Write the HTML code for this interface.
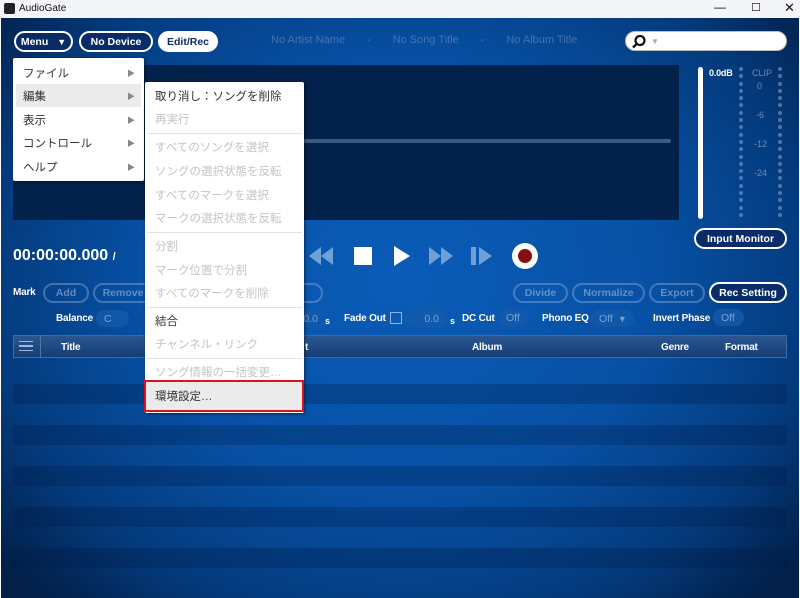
<!DOCTYPE html>
<html><head><meta charset="utf-8"><style>
*{margin:0;padding:0;box-sizing:border-box}
body{width:800px;height:598px;overflow:hidden;font-family:"Liberation Sans","Noto Sans CJK JP",sans-serif;position:relative;background:#fff;white-space:nowrap}
.abs{position:absolute}
#tb{left:0;top:0;width:800px;height:18px;background:#f3f5f9;font-size:10px;color:#111}
#app{left:1px;top:18px;width:798px;height:580px;background:radial-gradient(ellipse 65% 75% at 50% 45%,#0a5cb8 0%,#0750a4 50%,#043a7c 80%,#02204a 100%);overflow:hidden}
.btn{position:absolute;height:21px;border:2px solid #fff;border-radius:11px;color:#fff;font-size:10.5px;font-weight:bold;display:flex;align-items:center;justify-content:center}
.dbtn{position:absolute;height:20px;border:2px solid rgba(140,170,210,.45);border-radius:10px;color:rgba(160,185,215,.6);font-size:10.5px;font-weight:bold;display:flex;align-items:center;justify-content:center}
.lbl{position:absolute;color:#fff;font-size:10px;font-weight:bold;letter-spacing:-0.2px}
.pill{position:absolute;height:17px;border-radius:9px;background:rgba(20,90,170,.8);color:rgba(150,180,215,.8);font-size:10.5px;display:flex;align-items:center;padding:0 8px}
.menu{position:absolute;background:#fff;box-shadow:1px 1px 3px rgba(0,0,0,.5);border-radius:2px}
.mi{position:absolute;left:10px;font-size:11.5px;color:#333}
.dis{color:#c4c4c4}
.sep{position:absolute;left:2px;right:2px;height:1px;background:#e2e2e2}
.arr{position:absolute;left:114px;font-size:8px;color:#888}
.stripe{position:absolute;left:12px;width:774px;height:20px;background:rgba(0,25,70,.28)}
.dots{position:absolute;width:5px}
.dots i{display:block;width:4px;height:4px;border-radius:2px;background:rgba(120,150,195,.65);margin-bottom:3.3px}
</style></head><body>
<div id="tb" class="abs"><div class="abs" style="left:4px;top:3px;width:11px;height:11px;background:#222;border-radius:2px"></div><span class="abs" style="left:19px;top:3px">AudioGate</span>
<span class="abs" style="left:714px;top:0;font-size:12px">—</span><span class="abs" style="left:751px;top:1px;font-size:11px">☐</span><span class="abs" style="left:784px;top:0;font-size:13px">✕</span></div>
<div id="app" class="abs">
 <div class="btn" style="left:13px;top:13px;width:59px;background:#0a2c66">Menu <span style="margin-left:9px;font-size:9px">▼</span></div>
 <div class="btn" style="left:78px;top:13px;width:74px;background:#0a2c66">No Device</div>
 <div class="btn" style="left:157px;top:13px;width:60px;background:#fff;color:#0a2c66">Edit/Rec</div>
 <div class="abs" style="left:270px;top:16px;color:rgba(120,150,200,.55);font-size:11px">No Artist Name<span style="margin:0 22px">-</span>No Song Title<span style="margin:0 22px">-</span>No Album Title</div>
 <div class="abs" style="left:624px;top:13px;width:162px;height:20px;background:#fff;border-radius:10px;border:1px solid #bbb">
  <svg class="abs" style="left:5px;top:2px" width="16" height="15"><circle cx="9" cy="6.5" r="4.5" fill="none" stroke="#111" stroke-width="2.2"/><path d="M5.8 9.8 L2 13.5" stroke="#111" stroke-width="2.4"/></svg>
  <span class="abs" style="left:25px;top:5px;font-size:8px;color:#aaa">▼</span></div>
 <div class="abs" style="left:12px;top:47px;width:666px;height:155px;background:#03224b"></div>
 <div class="abs" style="left:290px;top:121px;width:380px;height:4px;border-radius:2px;background:#3a5a80"></div>
 <div class="abs" style="left:697px;top:49px;width:5px;height:152px;border-radius:3px;background:#fff"></div>
 <div class="lbl" style="left:708px;top:50px;font-size:9px">0.0dB</div>
 <div class="abs" style="left:751px;top:50px;font-size:9px;color:rgba(150,175,210,.7)">CLIP</div>
 <div class="abs" style="left:756px;top:63px;font-size:9px;color:rgba(150,175,210,.7)">0</div>
 <div class="abs" style="left:755px;top:92px;font-size:9px;color:rgba(150,175,210,.7)">-6</div>
 <div class="abs" style="left:753px;top:121px;font-size:9px;color:rgba(150,175,210,.7)">-12</div>
 <div class="abs" style="left:753px;top:150px;font-size:9px;color:rgba(150,175,210,.7)">-24</div>
 <div class="dots" style="left:738px;top:49px"><i></i><i></i><i></i><i></i><i></i><i></i><i></i><i></i><i></i><i></i><i></i><i></i><i></i><i></i><i></i><i></i><i></i><i></i><i></i><i></i><i></i></div>
 <div class="dots" style="left:777px;top:49px"><i></i><i></i><i></i><i></i><i></i><i></i><i></i><i></i><i></i><i></i><i></i><i></i><i></i><i></i><i></i><i></i><i></i><i></i><i></i><i></i><i></i></div>
 <div class="btn" style="left:693px;top:210px;width:93px;background:#0a2c66">Input Monitor</div>
 <div class="abs" style="left:12px;top:229px;color:#fff;font-size:16px;font-weight:bold">00:00:00.000 <span style="font-size:11px">/</span></div>
 <svg class="abs" style="left:300px;top:224px" width="245" height="30">
  <path d="M8 14 L20 5 V23Z M20 14 L32 5 V23Z" fill="#6fa0d8"/>
  <rect x="53" y="5" width="18" height="18" fill="#fff"/>
  <path d="M93 4 L109 14 L93 24Z" fill="#fff"/>
  <path d="M128 5 L140 14 L128 23Z M140 5 L152 14 L140 23Z" fill="#6fa0d8"/>
  <rect x="170" y="5" width="5" height="18" fill="#6fa0d8"/><path d="M178 5 L191 14 L178 23Z" fill="#6fa0d8"/>
  <circle cx="224" cy="14" r="13" fill="#fff"/><circle cx="224" cy="14" r="7" fill="#8b0d12"/>
 </svg>
 <div class="lbl" style="left:12px;top:269px">Mark</div>
 <div class="dbtn" style="left:42px;top:265px;width:46px">Add</div>
 <div class="dbtn" style="left:92px;top:265px;width:60px">Remove</div>
 <div class="dbtn" style="left:290px;top:265px;width:32px"></div>
 <div class="dbtn" style="left:512px;top:265px;width:55px">Divide</div>
 <div class="dbtn" style="left:571px;top:265px;width:73px">Normalize</div>
 <div class="dbtn" style="left:648px;top:265px;width:56px">Export</div>
 <div class="btn" style="left:708px;top:264px;width:78px;background:#0a2c66">Rec Setting</div>
 <div class="lbl" style="left:55px;top:295px">Balance</div>
 <div class="pill" style="left:95px;top:292px;width:33px">C</div>
 <div class="pill" style="left:285px;top:292px;width:40px;justify-content:flex-end">0.0</div><div class="lbl" style="left:324px;top:298px;font-size:9px">s</div>
 <div class="lbl" style="left:343px;top:295px">Fade Out</div>
 <div class="abs" style="left:389px;top:294px;width:12px;height:12px;border:1.5px solid #8ab4e6"></div>
 <div class="pill" style="left:404px;top:292px;width:42px;justify-content:flex-end">0.0</div><div class="lbl" style="left:449px;top:298px;font-size:9px">s</div>
 <div class="lbl" style="left:461px;top:295px">DC Cut</div>
 <div class="pill" style="left:497px;top:291px;width:30px">Off</div>
 <div class="lbl" style="left:541px;top:295px">Phono EQ</div>
 <div class="pill" style="left:590px;top:292px;width:43px">Off <span style="font-size:9px;margin-left:5px">▼</span></div>
 <div class="lbl" style="left:652px;top:295px">Invert Phase</div>
 <div class="pill" style="left:712px;top:291px;width:31px">Off</div>
 <div class="abs" style="left:12px;top:317px;width:774px;height:23px;background:linear-gradient(#2a5690,#163e74);border:1px solid #3d6aa3"></div>
 <div class="abs" style="left:12px;top:317px;width:28px;height:23px;border-right:1px solid #4a75ad"><div style="margin:6px 6px;width:14px;height:10px;border-top:1.5px solid #9cb8dc;border-bottom:1.5px solid #9cb8dc"><div style="margin-top:3px;height:1.5px;background:#9cb8dc"></div></div></div>
 <div class="lbl" style="left:60px;top:324px">Title</div>
 <div class="lbl" style="left:304px;top:324px">t</div>
 <div class="lbl" style="left:471px;top:324px">Album</div>
 <div class="lbl" style="left:660px;top:324px">Genre</div>
 <div class="lbl" style="left:724px;top:324px">Format</div>
 <div class="stripe" style="top:366px"></div><div class="stripe" style="top:407px"></div><div class="stripe" style="top:448px"></div><div class="stripe" style="top:489px"></div><div class="stripe" style="top:530px"></div>
</div>
<div class="menu" style="left:13px;top:58px;width:131px;height:123px">
 <div class="abs" style="left:3px;top:26px;width:125px;height:23px;background:#ebebeb"></div>
 <div class="mi" style="top:7px">ファイル</div><div class="arr" style="top:10px">▶</div>
 <div class="mi" style="top:30px">編集</div><div class="arr" style="top:33px">▶</div>
 <div class="mi" style="top:54px">表示</div><div class="arr" style="top:57px">▶</div>
 <div class="mi" style="top:77px">コントロール</div><div class="arr" style="top:80px">▶</div>
 <div class="mi" style="top:101px">ヘルプ</div><div class="arr" style="top:104px">▶</div>
</div>
<div class="menu" style="left:145px;top:82px;width:159px;height:331px">
 <div class="mi" style="top:6px">取り消し：ソングを削除</div>
 <div class="mi dis" style="top:29px">再実行</div>
 <div class="sep" style="top:51px"></div>
 <div class="mi dis" style="top:57px">すべてのソングを選択</div>
 <div class="mi dis" style="top:81px">ソングの選択状態を反転</div>
 <div class="mi dis" style="top:105px">すべてのマークを選択</div>
 <div class="mi dis" style="top:128px">マークの選択状態を反転</div>
 <div class="sep" style="top:150px"></div>
 <div class="mi dis" style="top:156px">分割</div>
 <div class="mi dis" style="top:180px">マーク位置で分割</div>
 <div class="mi dis" style="top:203px">すべてのマークを削除</div>
 <div class="sep" style="top:225px"></div>
 <div class="mi" style="top:231px">結合</div>
 <div class="mi dis" style="top:254px">チャンネル・リンク</div>
 <div class="sep" style="top:276px"></div>
 <div class="mi dis" style="top:282px">ソング情報の一括変更…</div>
 <div class="abs" style="left:-1px;top:298px;width:160px;height:32px;border:2px solid #e0101c;background:#ebebeb"></div>
 <div class="mi" style="top:306px">環境設定…</div>
</div>
</body></html>
